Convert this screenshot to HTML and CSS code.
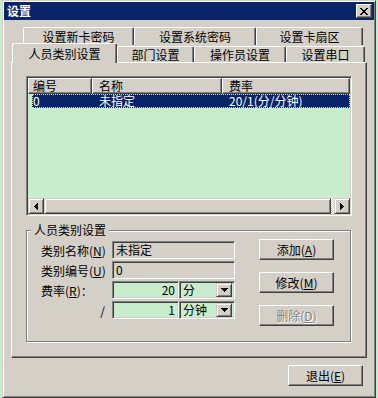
FILE: index.html
```html
<!DOCTYPE html>
<html lang="zh-CN">
<head>
    <meta charset="UTF-8">
    <title>设置</title>
    <link rel="stylesheet" href="styles.css">
</head>
<body>

    <div class="window">
        <div class="titlebar">
            <span class="title">设置</span>
            <span class="close-btn">
                <svg width="8" height="7" viewBox="0 0 8 7"><path d="M0 0h2v1H0zM6 0h2v1H6zM1 1h2v1H1zM5 1h2v1H5zM2 2h4v1H2zM3 3h2v1H3zM2 4h4v1H2zM1 5h2v1H1zM5 5h2v1H5zM0 6h2v1H0zM6 6h2v1H6z"/></svg>
            </span>
        </div>

        <div class="client">
            <!-- Tabs, two rows -->
            <div class="tabs">
                <div class="tab-row back">
                    <div class="tab tab-newcard">设置新卡密码</div>
                    <div class="tab tab-syspwd">设置系统密码</div>
                    <div class="tab tab-sector">设置卡扇区</div>
                </div>
                <div class="tab-row front">
                    <div class="tab active tab-person">人员类别设置</div>
                    <div class="tab tab-dept">部门设置</div>
                    <div class="tab tab-oper">操作员设置</div>
                    <div class="tab tab-port">设置串口</div>
                </div>
            </div>

            <div class="panel">
                <!-- List of categories -->
                <div class="listview">
                    <div class="lv-header">
                        <div class="lv-col col-id">编号</div>
                        <div class="lv-col col-name">名称</div>
                        <div class="lv-col col-rate">费率</div>
                    </div>
                    <div class="lv-body">
                        <div class="lv-row selected">
                            <div class="lv-cell cell-id">0</div>
                            <div class="lv-cell cell-name">未指定</div>
                            <div class="lv-cell cell-rate">20/1(分/分钟)</div>
                        </div>
                    </div>
                    <div class="hscroll">
                        <div class="sb-btn">
                            <svg width="4" height="7" viewBox="0 0 4 7"><path d="M0 3h1v1H0zM1 2h1v3H1zM2 1h1v5H2zM3 0h1v7H3z"/></svg>
                        </div>
                        <div class="sb-thumb"></div>
                        <div class="sb-track"></div>
                        <div class="sb-btn">
                            <svg width="4" height="7" viewBox="0 0 4 7"><path d="M3 3h1v1H3zM2 2h1v3H2zM1 1h1v5H1zM0 0h1v7H0z"/></svg>
                        </div>
                    </div>
                </div>

                <!-- Category editor -->
                <div class="group">
                    <div class="group-title">人员类别设置</div>
                    <div class="group-body">
                        <div class="form">
                            <div class="form-row">
                                <span class="label">类别名称(<u>N</u>)</span>
                                <div class="edit readonly wide">未指定</div>
                            </div>
                            <div class="form-row">
                                <span class="label">类别编号(<u>U</u>)</span>
                                <div class="edit readonly wide">0</div>
                            </div>
                            <div class="form-row">
                                <span class="label">费率(<u>R</u>)：</span>
                                <div class="edit number">20</div>
                                <div class="combo">
                                    <span class="combo-text">分</span>
                                    <span class="combo-btn"><svg width="7" height="4" viewBox="0 0 7 4"><path d="M0 0h7v1H0zM1 1h5v1H1zM2 2h3v1H2zM3 3h1v1H3z"/></svg></span>
                                </div>
                            </div>
                            <div class="form-row">
                                <span class="label slash">/</span>
                                <div class="edit number">1</div>
                                <div class="combo">
                                    <span class="combo-text">分钟</span>
                                    <span class="combo-btn"><svg width="7" height="4" viewBox="0 0 7 4"><path d="M0 0h7v1H0zM1 1h5v1H1zM2 2h3v1H2zM3 3h1v1H3z"/></svg></span>
                                </div>
                            </div>
                        </div>
                        <div class="side-buttons">
                            <button class="btn">添加(<u>A</u>)</button>
                            <button class="btn">修改(<u>M</u>)</button>
                            <button class="btn" disabled>删除(<u>D</u>)</button>
                        </div>
                    </div>
                </div>
            </div>

            <div class="footer">
                <button class="btn">退出(<u>E</u>)</button>
            </div>
        </div>
    </div>

</body>
</html>
```

FILE: styles.css
```css
body {
    margin: 0;
    background-color: #c7edcc;
    font-family: "Noto Sans CJK SC", sans-serif;
    font-size: 12px;
    color: #000;
    overflow: hidden;
}
u {
    text-decoration: underline;
}
.window {
    width: 370px;
    height: 394px;
    margin-left: 2px;
    padding: 1px;
    border: 1px solid;
    border-color: #d4d0c8 #404040 #404040 #d4d0c8;
    box-shadow: inset 1px 1px #fff, inset -1px -1px #808080;
    background-color: #d4d0c8;
}
/* Title bar */
.titlebar {
    height: 18px;
    background-color: #0a246a;
    color: #fff;
    display: flex;
    align-items: center;
    justify-content: space-between;
    padding: 0 2px 0 3px;
}
.title {
    font-weight: bold;
    line-height: 18px;
}
.close-btn {
    width: 14px;
    height: 12px;
    border: 1px solid;
    border-color: #fff #404040 #404040 #fff;
    box-shadow: inset -1px -1px #808080;
    background-color: #d4d0c8;
    display: flex;
    align-items: center;
    justify-content: center;
}
.close-btn svg {
    display: block;
}
.client {
    padding: 7px 7px 0 7px;
}
/* Tabs */
.tabs {
    height: 35px;
}
.tab-row {
    display: flex;
}
.tab-row.back {
    height: 18px;
    padding-left: 12px;
}
.tab-row.front {
    height: 17px;
    padding-left: 1px;
}
.tab {
    box-sizing: border-box;
    border-top: 1px solid #fff;
    border-left: 1px solid #fff;
    border-right: 1px solid #404040;
    box-shadow: inset -1px 0 #808080;
    border-radius: 2px 2px 0 0;
    background-color: #d4d0c8;
    text-align: center;
    line-height: 16px;
    white-space: nowrap;
}
.back .tab {
    height: 18px;
    padding-top: 1px;
}
.front .tab {
    height: 16px;
    margin-top: 1px;
}
.front .tab.active {
    position: relative;
    z-index: 1;
    height: 20px;
    margin-top: -2px;
    padding-top: 2px;
}
.tab-newcard { width: 111px; }
.tab-syspwd { width: 122px; }
.tab-sector { width: 107px; }
.tab-person { width: 105px; }
.tab-dept { width: 77px; }
.tab-oper { width: 92px; }
.tab-port { width: 79px; }
/* Tab page */
.panel {
    box-sizing: border-box;
    height: 296px;
    border: 1px solid;
    border-color: #fff #404040 #404040 #fff;
    box-shadow: inset -1px -1px #808080;
    padding: 13px 0 0 14px;
}
/* List view */
.listview {
    box-sizing: border-box;
    width: 326px;
    height: 140px;
    padding: 1px;
    border: 1px solid;
    border-color: #808080 #fff #fff #808080;
    box-shadow: inset 1px 1px #404040, inset -1px -1px #d4d0c8;
    background-color: #c7edcc;
    display: flex;
    flex-direction: column;
}
.lv-header {
    display: flex;
    height: 16px;
}
.lv-col {
    box-sizing: border-box;
    height: 16px;
    line-height: 14px;
    border-top: 1px solid #fff;
    border-left: 1px solid #fff;
    border-right: 1px solid #404040;
    border-bottom: 1px solid #404040;
    box-shadow: inset -1px -1px #808080;
    background-color: #d4d0c8;
    padding-left: 6px;
}
.col-id { width: 64px; padding-left: 4px; }
.col-name { width: 130px; }
.col-rate { flex: 1; }
.lv-body {
    flex: 1;
}
.lv-row {
    display: flex;
    height: 14px;
    line-height: 14px;
    margin-left: 4px;
}
.lv-row.selected {
    background-color: #0a246a;
    color: #fff;
    outline: 1px dotted #e8e4a0;
    outline-offset: -1px;
}
.cell-id { width: 59px; padding-left: 1px; }
.cell-name { width: 123px; padding-left: 7px; }
.cell-rate { padding-left: 7px; }
.hscroll {
    display: flex;
    height: 16px;
}
.sb-btn, .sb-thumb {
    box-sizing: border-box;
    height: 16px;
    border: 1px solid;
    border-color: #d4d0c8 #404040 #404040 #d4d0c8;
    box-shadow: inset 1px 1px #fff, inset -1px -1px #808080;
    background-color: #d4d0c8;
}
.sb-btn {
    width: 16px;
    display: flex;
    align-items: center;
    justify-content: center;
}
.sb-btn svg, .combo-btn svg {
    display: block;
}
.sb-thumb {
    width: 287px;
}
.sb-track {
    flex: 1;
    background: repeating-conic-gradient(#fff 0 25%, #d4d0c8 0 50%) 0 0 / 2px 2px;
}
/* Group box */
.group {
    box-sizing: border-box;
    width: 325px;
    height: 112px;
    margin-top: 14px;
    border: 1px solid #808080;
    box-shadow: inset 1px 1px #fff, 1px 1px #fff;
}
.group-title {
    width: max-content;
    height: 14px;
    margin: -8px 0 0 4px;
    padding: 0 3px;
    line-height: 14px;
    background-color: #d4d0c8;
}
.group-body {
    display: flex;
    padding: 4px 0 0 14px;
}
.form-row {
    display: flex;
    align-items: center;
    height: 18px;
    margin-bottom: 2px;
}
.label {
    width: 71px;
    white-space: nowrap;
}
.label.slash {
    text-align: right;
    padding-right: 7px;
    box-sizing: border-box;
}
.edit, .combo {
    box-sizing: border-box;
    height: 18px;
    border: 1px solid;
    border-color: #808080 #fff #fff #808080;
    box-shadow: inset 1px 1px #404040, inset -1px -1px #d4d0c8;
    line-height: 16px;
    white-space: nowrap;
}
.edit.readonly {
    background-color: #d4d0c8;
    padding-left: 3px;
}
.edit.wide {
    width: 123px;
}
.edit.number {
    width: 67px;
    background-color: #c7edcc;
    text-align: right;
    padding-right: 3px;
}
.combo {
    width: 56px;
    background-color: #c7edcc;
    display: flex;
    align-items: center;
    justify-content: space-between;
    padding: 0 2px 0 3px;
}
.combo-btn {
    box-sizing: border-box;
    width: 16px;
    height: 14px;
    border: 1px solid;
    border-color: #d4d0c8 #404040 #404040 #d4d0c8;
    box-shadow: inset 1px 1px #fff, inset -1px -1px #808080;
    background-color: #d4d0c8;
    display: flex;
    align-items: center;
    justify-content: center;
}
/* Push buttons */
.btn {
    box-sizing: border-box;
    width: 75px;
    height: 21px;
    padding: 0;
    border: 1px solid;
    border-color: #fff #404040 #404040 #fff;
    box-shadow: inset -1px -1px #808080;
    background-color: #d4d0c8;
    font-family: inherit;
    font-size: 12px;
    color: #000;
}
.btn:disabled {
    color: #808080;
    text-shadow: 1px 1px #fff;
}
.side-buttons {
    display: flex;
    flex-direction: column;
    gap: 12px;
    margin: -2px 0 0 24px;
}
.footer {
    display: flex;
    justify-content: flex-end;
    margin-top: 7px;
    padding-right: 4px;
}
```
